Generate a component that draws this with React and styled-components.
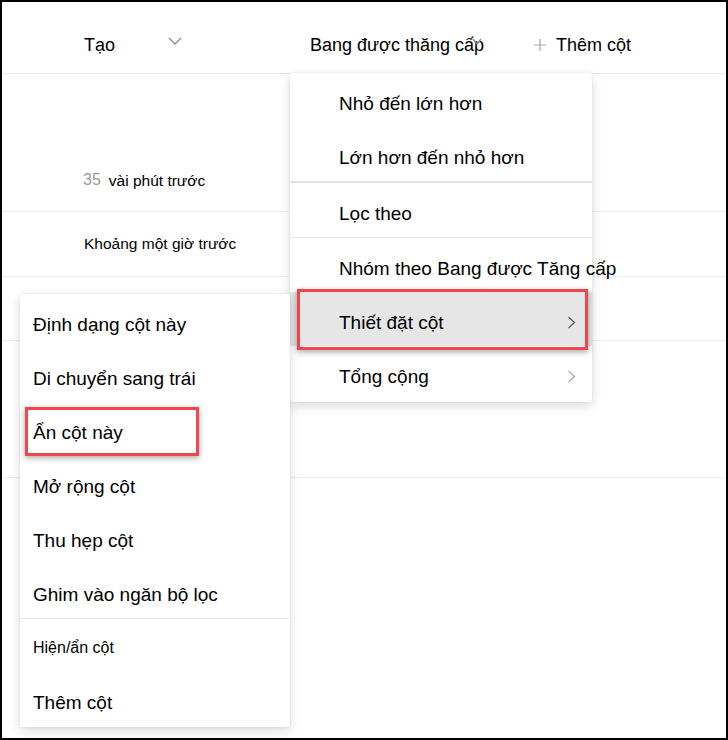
import styled, { createGlobalStyle } from "styled-components";

const GlobalStyle = createGlobalStyle`
  html, body {
    margin: 0;
    padding: 0;
    background: #fff;
  }
  body {
    font-family: "Liberation Sans", Arial, sans-serif;
    color: #000;
  }
`;

const Frame = styled.div`
  position: relative;
  width: 728px;
  height: 740px;
  box-sizing: border-box;
  border: 2px solid #000;
  overflow: hidden;
  background: #fff;
`;

const Header = styled.div`
  display: flex;
  align-items: center;
  box-sizing: border-box;
  height: 72px;
  padding: 15px 0 0 82px;
  border-bottom: 1px solid #e8e8e8;
  font-size: 18px;
`;

const HeaderCell = styled.div`
  display: flex;
  align-items: center;
  flex: none;
  width: ${(p) => p.$width}px;
`;

const HeaderLabel = styled.span`
  min-width: ${(p) => p.$minWidth || 0}px;
  white-space: nowrap;
`;

const Caret = styled.svg`
  flex: none;
  margin-left: ${(p) => p.$offset || 0}px;
  margin-bottom: 8px;
  color: #8c8c8c;
`;

const PlusIcon = styled.svg`
  flex: none;
  margin-right: 10px;
  color: #a6a6a6;
`;

const Row = styled.div`
  display: flex;
  align-items: ${(p) => p.$align || "center"};
  box-sizing: border-box;
  height: ${(p) => p.$h}px;
  padding: 0 0 ${(p) => p.$pb || 0}px 82px;
  border-bottom: 1px solid #efefef;
  font-size: 15.5px;
  line-height: 20px;
`;

const TimeText = styled.span`
  white-space: nowrap;
`;

const Count = styled.span`
  margin: 0 8px 0 -1px;
  font-size: 16px;
  color: #9b9b9b;
  position: relative;
  top: -1px;
`;

const Menu = styled.div`
  position: absolute;
  left: ${(p) => p.$x}px;
  top: ${(p) => p.$y}px;
  width: ${(p) => p.$w}px;
  padding-bottom: ${(p) => p.$pb || 0}px;
  background: #fff;
  border-radius: 2px;
  box-shadow: 0 4px 12px rgba(0, 0, 0, 0.14), 0 0 3px rgba(0, 0, 0, 0.08);
  z-index: ${(p) => p.$z || 1};
`;

const Item = styled.div`
  position: relative;
  display: flex;
  align-items: center;
  box-sizing: border-box;
  height: ${(p) => p.$h || 54}px;
  padding: ${(p) => p.$pt ?? 8}px 16px 0 ${(p) => p.$pl}px;
  font-size: ${(p) => p.$fs || 19}px;
  white-space: nowrap;
  background: ${(p) => (p.$active ? "#e6e6e6" : "transparent")};
`;

const Divider = styled.div`
  height: ${(p) => (p.$thick ? 2 : 1)}px;
  background: ${(p) => (p.$thick ? "#e2e2e2" : "#ebebeb")};
`;

const Chevron = styled.svg`
  flex: none;
  margin-left: auto;
  margin-bottom: 2px;
  color: ${(p) => (p.$muted ? "#a8a8a8" : "#555")};
`;

const Callout = styled.span`
  position: absolute;
  left: ${(p) => p.$l}px;
  top: ${(p) => p.$t}px;
  width: ${(p) => p.$w}px;
  height: ${(p) => p.$h}px;
  box-sizing: border-box;
  border: 3px solid #f1464c;
  box-shadow: 0 2px 6px rgba(0, 0, 0, 0.35);
  pointer-events: none;
`;

const DownCaret = ({ w = 14, h = 8, offset }) => (
  <Caret width={w} height={h} viewBox={`0 0 ${w} ${h}`} $offset={offset}>
    <polyline
      points={`1,1 ${w / 2},${h - 1} ${w - 1},1`}
      fill="none"
      stroke="currentColor"
      strokeWidth="1.3"
    />
  </Caret>
);

const RightChevron = ({ muted }) => (
  <Chevron width="9" height="13" viewBox="0 0 9 13" $muted={muted}>
    <polyline
      points="1.5,1 7.5,6.5 1.5,12"
      fill="none"
      stroke="currentColor"
      strokeWidth="1.2"
    />
  </Chevron>
);

const sortMenu = [
  { label: "Nhỏ đến lớn hơn" },
  { label: "Lớn hơn đến nhỏ hơn", divider: "thick" },
  { label: "Lọc theo", divider: "thin" },
  { label: "Nhóm theo Bang được Tăng cấp" },
  { label: "Thiết đặt cột", sub: true, active: true },
  { label: "Tổng cộng", sub: true, muted: true },
];

const columnMenu = [
  "Định dạng cột này",
  "Di chuyển sang trái",
  "Ẩn cột này",
  "Mở rộng cột",
  "Thu hẹp cột",
  "Ghim vào ngăn bộ lọc",
];

export default function App() {
  return (
    <>
      <GlobalStyle />
      <Frame>
        <Header>
          <HeaderCell $width={226}>
            <HeaderLabel $minWidth={84}>Tạo</HeaderLabel>
            <DownCaret />
          </HeaderCell>
          <HeaderCell $width={224}>
            <HeaderLabel>Bang được thăng cấp</HeaderLabel>
            <DownCaret w={10} h={7} offset={-12} />
          </HeaderCell>
          <HeaderCell $width={150}>
            <PlusIcon width="12" height="12" viewBox="0 0 12 12">
              <path d="M6 0v12M0 6h12" stroke="currentColor" strokeWidth="1.2" />
            </PlusIcon>
            <HeaderLabel>Thêm cột</HeaderLabel>
          </HeaderCell>
        </Header>

        <Row $h={138} $align="flex-end" $pb={20}>
          <TimeText>
            <Count>35</Count>
            vài phút trước
          </TimeText>
        </Row>
        <Row $h={65}>
          <TimeText>Khoảng một giờ trước</TimeText>
        </Row>
        <Row $h={64} />
        <Row $h={137} />

        <Menu $x={288} $y={71} $w={302} $pb={2} $z={2}>
          {sortMenu.map((it) => (
            <div key={it.label}>
              <Item $pl={49} $active={it.active}>
                {it.label}
                {it.sub && <RightChevron muted={it.muted} />}
                {it.active && <Callout $l={7} $t={-3} $w={291} $h={61} />}
              </Item>
              {it.divider && <Divider $thick={it.divider === "thick"} />}
            </div>
          ))}
        </Menu>

        <Menu $x={18} $y={292} $w={270} $pb={1} $z={3}>
          {columnMenu.map((label) => (
            <Item key={label} $pl={13}>
              {label}
              {label === "Ẩn cột này" && (
                <Callout $l={5} $t={5} $w={174} $h={49} />
              )}
            </Item>
          ))}
          <Divider />
          <Item $pl={13} $h={53} $pt={4} $fs={16}>
            Hiện/ẩn cột
          </Item>
          <Item $pl={13}>Thêm cột</Item>
        </Menu>
      </Frame>
    </>
  );
}
